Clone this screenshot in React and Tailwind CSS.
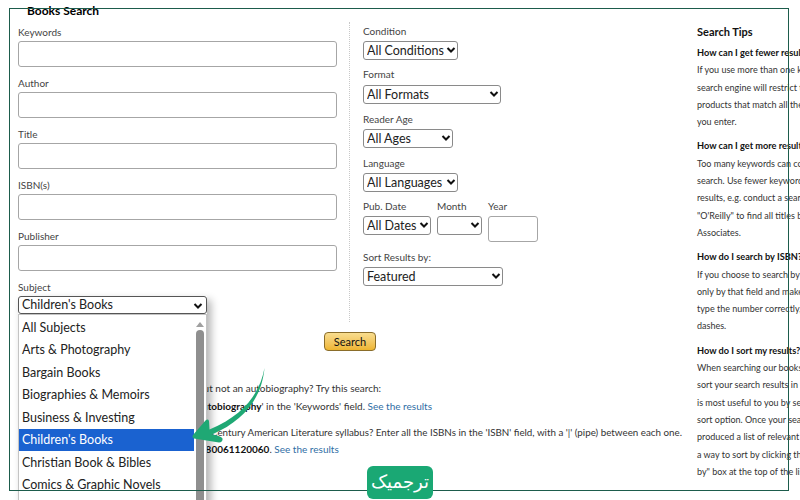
import React from 'react';

const textFields = ['Keywords', 'Author', 'Title', 'ISBN(s)', 'Publisher'];

const subjects = [
  'All Subjects',
  'Arts & Photography',
  'Bargain Books',
  'Biographies & Memoirs',
  'Business & Investing',
  "Children's Books",
  'Christian Book & Bibles',
  'Comics & Graphic Novels',
];

const tips = [
  {
    title: 'How can I get fewer results?',
    lines: [
      'If you use more than one keyword, the',
      'search engine will restrict the results to',
      'products that match all the keywords',
      'you enter.',
    ],
  },
  {
    title: 'How can I get more results?',
    lines: [
      'Too many keywords can confuse the',
      'search. Use fewer keywords for better',
      'results, e.g. conduct a search for',
      '"O\'Reilly" to find all titles by O\'Reilly &',
      'Associates.',
    ],
  },
  {
    title: 'How do I search by ISBN?',
    lines: [
      'If you choose to search by ISBN, search',
      'only by that field and make sure you',
      'type the number correctly, without',
      'dashes.',
    ],
  },
  {
    title: 'How do I sort my results?',
    lines: [
      'When searching our books, you can',
      'sort your search results in the order that',
      'is most useful to you by selecting a',
      'sort option. Once your search has',
      'produced a list of relevant results, find',
      'a way to sort by clicking the "Sort',
      'by" box at the top of the list.',
    ],
  },
];

const Label = ({ children }) => (
  <div className="h-[15px] text-[10px] leading-[15px] text-[#444]">{children}</div>
);

const Chevron = () => (
  <svg width="10" height="8" viewBox="0 0 10 8" fill="none" stroke="#111" strokeWidth="2">
    <path d="M1.5 2 5 5.5 8.500 2" />
  </svg>
);

const Select = ({ options, className }) => (
  <div className={`relative h-[19px] ${className}`}>
    <select
      defaultValue={options[0]}
      className="block h-full w-full appearance-none rounded-[3px] border border-[#8a8a8a] bg-white pl-[3px] pr-[12px] text-[12.5px] leading-[17px] text-[#222]"
    >
      {options.map((option) => (
        <option key={option}>{option}</option>
      ))}
    </select>
    <span className="pointer-events-none absolute right-[2px] top-[5px] flex">
      <Chevron />
    </span>
  </div>
);

const App = () => {
  return (
    <div className="relative h-[500px] w-[800px] overflow-hidden bg-white font-['Lato',sans-serif]">
      <h1 className="h-[17px] pl-[27px] pt-[3px] text-[12px] font-bold leading-[15px] text-black">Books Search</h1>

      <div className="flex h-[303px] pt-[7px]">
        {/* Left column */}
        <div className="ml-[18px] flex w-[319px] shrink-0 flex-col pt-[1px]">
          {textFields.map((field) => (
            <div key={field} className="mb-[9px] flex flex-col">
              <div className="mb-[1px]">
                <Label>{field}</Label>
              </div>
              <input className="h-[26px] w-full rounded-[3px] border border-[#a6a6a6] bg-white" />
            </div>
          ))}
          <Label>Subject</Label>
        </div>

        {/* Divider */}
        <div className="ml-[12px] mt-[-2px] h-[300px] shrink-0 border-l border-dotted border-[#c8c8c8]" />

        {/* Middle column */}
        <div className="ml-[13px] flex w-[334px] shrink-0 flex-col">
          <Label>Condition</Label>
          <Select options={['All Conditions']} className="mt-[2px] w-[95px]" />
          <div className="mt-[7px]">
            <Label>Format</Label>
          </div>
          <Select options={['All Formats']} className="mt-[3px] w-[138px]" />
          <div className="mt-[8px]">
            <Label>Reader Age</Label>
          </div>
          <Select options={['All Ages']} className="mt-[2px] w-[90px]" />
          <div className="mt-[8px]">
            <Label>Language</Label>
          </div>
          <Select options={['All Languages']} className="mt-[2px] w-[95px]" />
          <div className="mt-[7px] flex gap-[6px]">
            <div className="flex flex-col">
              <Label>Pub. Date</Label>
              <Select options={['All Dates']} className="mt-[2px] w-[68px]" />
            </div>
            <div className="flex flex-col">
              <Label>Month</Label>
              <Select options={['']} className="mt-[2px] w-[45px]" />
            </div>
            <div className="flex flex-col">
              <Label>Year</Label>
              <input className="mt-[2px] h-[26px] w-[50px] rounded-[3px] border border-[#a6a6a6] bg-white" />
            </div>
          </div>
          <div className="mt-[8px]">
            <Label>Sort Results by:</Label>
          </div>
          <Select options={['Featured']} className="mt-[2px] w-[140px]" />
        </div>

        {/* Search tips */}
        <div className="flex w-[200px] shrink-0 flex-col">
          <h2 className="h-[20px] shrink-0 text-[11px] font-bold leading-[15px] text-[#111]">Search Tips</h2>
          {tips.map((tip) => (
            <div key={tip.title} className="mb-[7px] shrink-0 whitespace-nowrap text-[9px] leading-[17.3px] text-[#333]">
              <div className="text-[9.2px] font-bold text-[#111]">{tip.title}</div>
              {tip.lines.map((line) => (
                <div key={line}>{line}</div>
              ))}
            </div>
          ))}
        </div>
      </div>

      {/* Search button */}
      <div className="mt-[12px] flex pl-[324px]">
        <button className="h-[19px] w-[52px] rounded-[4px] border border-[#8a6d2a] bg-gradient-to-b from-[#f8dd8e] to-[#eeb52e] text-[11px] leading-[15px] text-[#111]">
          Search
        </button>
      </div>

      {/* Search examples */}
      <div className="mt-[28px] w-[682px] whitespace-nowrap text-[10px] leading-[18px] text-[#333]">
        <div className="ml-[198px]">but not an autobiography? Try this search:</div>
        <div className="ml-[195px]">
          <b className="text-[#111]">'autobiography</b>' in the 'Keywords' field.{' '}
          <span className="text-[#2f6ea5]">See the results</span>
        </div>
        <div className="mt-[8px] text-right text-[9.8px]">
          20th Century American Literature syllabus? Enter all the ISBNs in the 'ISBN' field, with a '|' (pipe) between each one.
        </div>
        <div className="ml-[194px] mt-[-1px]">
          <b className="text-[#111]">9780061120060</b>. <span className="text-[#2f6ea5]">See the results</span>
        </div>
      </div>

      {/* Subject dropdown, opened over the page */}
      <div className="absolute left-[18px] top-[296px] w-[189px] shadow-[4px_4px_8px_rgba(0,0,0,0.3)]">
        <div className="flex h-[18px] items-center justify-between rounded-[3px] border border-[#555] bg-white pl-[3px] pr-[3px] pt-[1px] text-[12.5px] text-[#222]">
          <span>Children's Books</span>
          <Chevron />
        </div>
        <div className="relative h-[190px] border border-[#c4c4c4] bg-white text-[12.5px] leading-[22.500px] text-[#222]">
          <ul className="w-[175px] pt-[1px]">
            {subjects.map((subject) => (
              <li
                key={subject}
                className={subject === "Children's Books" ? 'h-[22.500px] bg-[#1a62d0] pl-[3px] pt-[0.500px] text-white' : 'h-[22.500px] pl-[3px] pt-[0.500px]'}
              >
                {subject}
              </li>
            ))}
          </ul>
          <div className="absolute right-[2px] top-[0px] flex h-full w-[8px] flex-col items-center">
            <div className="mt-[7px] h-0 w-0 border-x-[4px] border-b-[5px] border-x-transparent border-b-[#a0a0a0]" />
            <div className="mt-[3px] w-[8px] flex-1 rounded-t-[4px] bg-[#8f8f8f]" />
          </div>
        </div>
      </div>

      {/* Green frame of the article image */}
      <div className="pointer-events-none absolute left-[9px] top-[8px] h-[483px] w-[780px] border border-[#1d5c4c]" />

      {/* Arrow */}
      <svg className="pointer-events-none absolute left-0 top-0" width="800" height="500" viewBox="0 0 800 500">
        <path
          d="M264.500 368 C260 393 244 415 209.500 429.500 L209 421 Q208 418.500 205.500 420.500 L193 435 Q191.500 437.500 194 438.500 L219 442.500 Q223 442 222.500 438.500 Q221 436 212 434.500 C246 420 262 396 264.500 368 Z"
          fill="#1fa874"
        />
      </svg>

      {/* Brand badge */}
      <div className="absolute left-[367px] top-[466px] flex h-[33px] w-[66px] items-center justify-center rounded-[6px] bg-[#1aa874] pb-[2px] font-['DejaVu_Sans',sans-serif] text-[18px] leading-none text-white">
        ترجمیک
      </div>
    </div>
  );
};

export default App;
